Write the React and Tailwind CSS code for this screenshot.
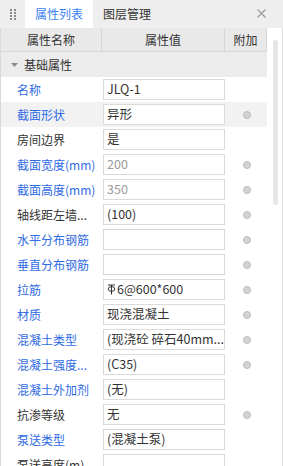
import React from 'react';

const rows = [
  { name: '名称', value: 'JLQ-1', blue: true },
  { name: '截面形状', value: '异形', blue: true, dot: true, active: true },
  { name: '房间边界', value: '是' },
  { name: '截面宽度(mm)', value: '200', blue: true, dot: true, muted: true },
  { name: '截面高度(mm)', value: '350', blue: true, dot: true, muted: true },
  { name: '轴线距左墙...', value: '(100)', dot: true },
  { name: '水平分布钢筋', value: '', blue: true, dot: true },
  { name: '垂直分布钢筋', value: '', blue: true, dot: true },
  { name: '拉筋', value: '6@600*600', blue: true, dot: true, rebar: true },
  { name: '材质', value: '现浇混凝土', blue: true, dot: true },
  { name: '混凝土类型', value: '(现浇砼 碎石40mm...', blue: true, dot: true },
  { name: '混凝土强度...', value: '(C35)', blue: true, dot: true },
  { name: '混凝土外加剂', value: '(无)', blue: true },
  { name: '抗渗等级', value: '无', dot: true },
  { name: '泵送类型', value: '(混凝土泵)', blue: true },
  { name: '泵送高度(m)', value: '' },
];

const Grip = () => (
  <div className="grid grid-cols-2 gap-x-[2px] gap-y-[1px]">
    {[0, 1, 2, 3, 4, 5, 6, 7].map((i) => (
      <span key={i} className="w-[2px] h-[2px] bg-[#8a8a8a]" />
    ))}
  </div>
);

// steel grade mark used before bar diameters
const RebarMark = () => (
  <svg width="9" height="11" viewBox="0 0 9 11" className="mr-[1px] -mt-[1px]">
    <path d="M4.5 1 V10.5 M1 1 H8" stroke="#333" strokeWidth="1" fill="none" />
    <ellipse cx="4.5" cy="5" rx="3.3" ry="2.4" stroke="#333" strokeWidth="1" fill="none" />
  </svg>
);

const PropRow = ({ row }) => (
  <div className={`flex items-center h-[25px] ${row.active ? 'bg-[#f2f2f2]' : ''}`}>
    <div
      className={`w-[101px] pl-[16px] whitespace-nowrap overflow-hidden ${
        row.blue ? 'text-[#2f6be3]' : 'text-[#333]'
      }`}
    >
      {row.name}
    </div>
    <div className="w-[123px] pl-[1px]">
      <div
        className={`w-[122px] h-[21px] border border-[#dadada] bg-white pl-[3px] flex items-center whitespace-nowrap overflow-hidden text-[12.5px] ${
          row.muted ? 'text-[#9a9a9a]' : 'text-[#333]'
        }`}
      >
        {row.rebar && <RebarMark />}
        {row.value}
      </div>
    </div>
    <div className="flex-1 flex justify-center pl-[1px]">
      {row.dot && (
        <span className="w-[8px] h-[8px] rounded-full bg-[#d3d3d3] border border-[#bdbdbd]" />
      )}
    </div>
  </div>
);

export default function App() {
  return (
    <div
      className="w-[283px] h-[466px] overflow-hidden bg-white text-[12px] text-[#333]"
      style={{ fontFamily: '"Noto Sans CJK SC", "Noto Sans", sans-serif' }}
    >
      {/* Tabs */}
      <div className="flex h-[28px] bg-[#eeeeee]">
        <div className="w-[25px] flex items-center justify-center pt-[1px]">
          <Grip />
        </div>
        <div className="w-[68px] bg-white flex items-center justify-center text-[#3b7ff2]">
          属性列表
        </div>
        <div className="pl-[10px] flex items-center text-[#333]">图层管理</div>
        <div className="flex-1" />
        <div className="w-[22px] flex items-center pb-[2px] mr-[4px]">
          <svg width="9" height="9" viewBox="0 0 9 9">
            <path d="M0.5 0.5 L8.5 8.5 M8.5 0.5 L0.5 8.5" stroke="#9a9a9a" strokeWidth="1.1" />
          </svg>
        </div>
      </div>

      {/* Body */}
      <div className="flex h-[438px] border-l border-[#d9d9d9]">
        <div className="w-[266px]">
          <div className="flex h-[24px] bg-[#e9e9e9] border-b border-[#d7d7d7] border-r">
            <div className="w-[101px] border-r border-[#d7d7d7] flex items-center justify-center">
              属性名称
            </div>
            <div className="w-[123px] border-r border-[#d7d7d7] flex items-center justify-center">
              属性值
            </div>
            <div className="flex-1 flex items-center justify-center">附加</div>
          </div>
          <div className="flex items-center h-[25px] bg-[#ececec]">
            <svg width="7" height="4" viewBox="0 0 7 4" className="ml-[10px] mr-[6px]">
              <path d="M0 0 L7 0 L3.5 4 Z" fill="#8c8c8c" />
            </svg>
            <span>基础属性</span>
          </div>
          {rows.map((row) => (
            <PropRow key={row.name} row={row} />
          ))}
        </div>
        <div className="flex-1 flex border-r border-[#dcdcdc]">
          <div className="ml-[6px] mt-[12px] w-[5px] h-[165px] rounded-[3px] bg-[#e6e6e6]" />
        </div>
      </div>
    </div>
  );
}
